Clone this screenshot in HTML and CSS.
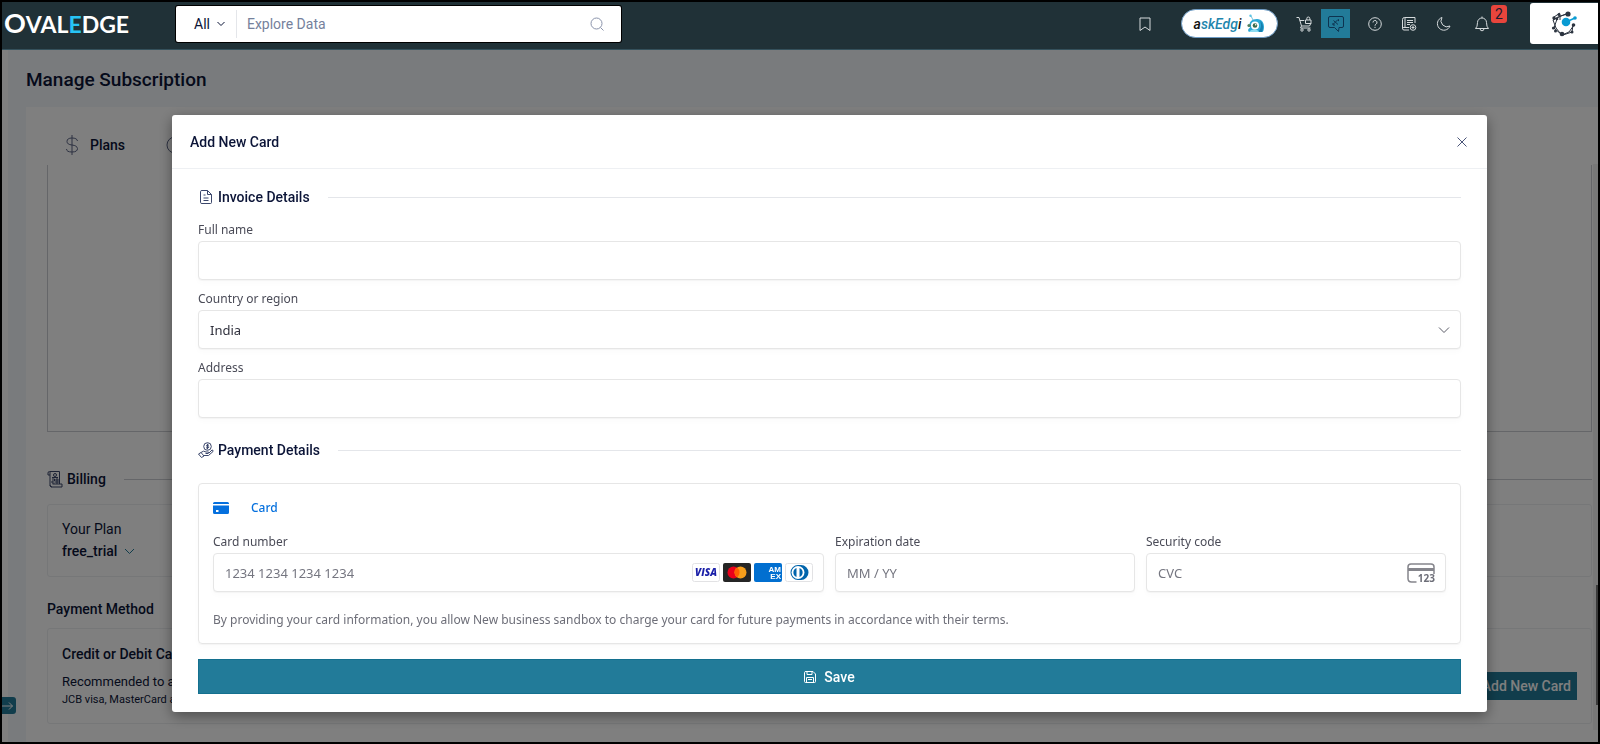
FILE: index.html
```html
<!DOCTYPE html>
<html lang="en">
<head>
    <meta charset="UTF-8">
    <meta name="viewport" content="width=device-width, initial-scale=1.0">
    <title>Manage Subscription</title>
    <link rel="stylesheet" href="styles.css">
</head>
<body>
<header class="topbar">
    <a class="logo" href="#"><span class="logo-big">O</span>VAL<span class="logo-accent">E</span>DGE</a>

    <form class="search">
        <button type="button" class="search-scope">All
            <svg width="10" height="6" viewBox="0 0 10 6"><path d="M1.5 1l3.5 3.5L8.500 1" /></svg>
        </button>
        <input type="text" class="search-input" placeholder="Explore Data" aria-label="Explore Data">
        <button type="button" class="search-go" aria-label="Search">
            <svg width="14" height="14" viewBox="0 0 14 14"><circle cx="6.500" cy="6.500" r="5.500" /><path d="M10.500 10.500l3 3" /></svg>
        </button>
    </form>

    <nav class="tools">
        <button class="tool" aria-label="Bookmarks">
            <svg width="16" height="16" viewBox="0 0 16 16"><path d="M3 2h10v12.500l-5-3.500-5 3.500z" /></svg>
        </button>
        <button class="ask" aria-label="askEdgi">
            <span>a<span class="ask-blue">skEdg</span>i</span>
            <svg width="18" height="20" viewBox="0 0 18 20">
                <path d="M6 6L4 2" stroke="#7ac4dd" fill="none" />
                <circle cx="3.500" cy="1.800" r="1.200" fill="#5cc4e4" />
                <path d="M2 18c-2-2 0-4 1-4-2-6 2-9 7-9 5 0 7 4 7 8 0 3-1 5-2 5z" fill="#2aa9d6" />
                <path d="M13 7c3 2 4 6 2 11h-4c3-3 4-7 2-11z" fill="#167fae" />
                <path d="M3 17c3-2 7-2 9 1H2z" fill="#8bdaf0" />
                <circle cx="8" cy="11.500" r="4" fill="#fff" />
                <circle cx="8" cy="11.500" r="2.300" fill="#3b6b4a" />
                <circle cx="8.700" cy="10.800" r=".8" fill="#fff" />
                <circle cx="2" cy="11.500" r="1.600" fill="#4f7f5e" />
            </svg>
        </button>
        <button class="tool tool-cart" aria-label="Cart">
            <svg width="16" height="16" viewBox="0 0 16 16">
                <path d="M.5 1.500h2.500l2.500 8.500h8l1.500-3M3.800 4.500h4.500M5.500 10l-1 2h10" />
                <circle cx="6" cy="14" r="1.200" /><circle cx="13" cy="14" r="1.200" />
                <path d="M9.500 4h5.500v3.500H9.500zM10.800 4V2.500a1.500 1.500 0 0 1 3 0V4" />
            </svg>
        </button>
        <button class="tool tool-active" aria-label="Feedback">
            <svg width="18" height="18" viewBox="0 0 18 18">
                <path d="M3 1.500h12q1.500 0 1.500 1.500v8q0 1.500-1.500 1.500h-3l-.5 4-4-4H3Q1.500 12.500 1.500 11V3Q1.500 1.500 3 1.500z" />
                <path d="M6 9.500l5-5M6.500 5.500l4.500 4M11.500 4.300v1.800M6 8v2h2" />
            </svg>
        </button>
        <button class="tool tool-help" aria-label="Help">
            <svg width="16" height="16" viewBox="0 0 16 16"><circle cx="8" cy="8" r="6.300" /><path d="M6 6.500a2 2 0 1 1 3 1.700q-1 .5-1 1.500M8 10.800v1.200" /></svg>
        </button>
        <button class="tool tool-doc" aria-label="Activity log">
            <svg width="16" height="16" viewBox="0 0 16 16">
                <path d="M14 7V1.500H3.500Q1.500 1.500 1.500 3.500v9q0 1.500 1.500 1.500h5M4 1.500v10M1.500 12.500q0-1 1.500-1h5M6 4.500h6M6 6.500h6M6 8.500h3" />
                <circle cx="12" cy="11.500" r="2.800" /><path d="M12 10v3M10.500 11.500h3" />
            </svg>
        </button>
        <button class="tool tool-moon" aria-label="Dark mode">
            <svg width="16" height="16" viewBox="0 0 16 16"><path d="M7 1.500A6.500 6.500 0 1 0 15 10 6 6 0 0 1 7 1.500z" /></svg>
        </button>
        <button class="tool tool-bell" aria-label="Notifications">
            <svg width="16" height="16" viewBox="0 0 16 16"><path d="M1.500 12.500Q3.500 11 3.500 6.500a4.500 4.500 0 0 1 9 0Q12.500 11 14.500 12.500zM8 2V.5M6 12.500a2 2.300 0 0 0 4 0" /></svg>
            <span class="badge">2</span>
        </button>
        <a class="tenant" href="#" aria-label="Tenant">
            <svg width="26" height="26" viewBox="0 0 26 26">
                <path class="net" d="M15 3L7 6 2 9l3 8 4 5 3 2 9-3 1-7M3 6l6-4M2 9l8-4 6-2M3 17l8 7M23 14l-5 7-7 3M6 8l-3 9M9 4v5" />
                <g fill="#2c3440">
                    <circle cx="17" cy="3" r="2.600" /><circle cx="8" cy="3.500" r="1.500" /><circle cx="3" cy="7" r="1.700" />
                    <circle cx="2.500" cy="17" r="1.600" /><circle cx="4.500" cy="20" r="1.500" /><circle cx="11" cy="23" r="2.300" />
                    <circle cx="21" cy="21" r="1.500" /><circle cx="22.500" cy="14" r="1.800" /><circle cx="6" cy="8" r="1.300" />
                </g>
                <path d="M15 11l9-4" stroke="#0a9bd3" stroke-width="1.500" />
                <circle cx="15" cy="11" r="4.300" fill="#0a9bd3" /><circle cx="24" cy="7" r="1.800" fill="#0a9bd3" />
            </svg>
        </a>
    </nav>
</header>

<main class="page">
    <h1>Manage Subscription</h1>
    <div class="content">
        <div class="tabs">
            <a class="tab" href="#">
                <svg width="14" height="20" viewBox="0 0 14 20"><path d="M7 0v20M12.500 6Q12 3 7 3T2 6.500Q2 9.500 7 10t5.500 3.500Q12.500 17 7 17T1.500 14" /></svg>
                Plans
            </a>
            <a class="tab" href="#" aria-label="Usage">
                <svg width="18" height="18" viewBox="0 0 18 18"><circle cx="9" cy="9" r="8" /><path d="M9 4v5l3 2" /></svg>
            </a>
        </div>

        <div class="plan-frame"></div>

        <h2 class="divider billing">
            <svg width="16" height="17" viewBox="0 0 16 17"><path d="M3 4H1V2q0-1.500 1.500-1.500H12.500V13M3 1v13M3 14q0 2 2 2h10v-3H5.500M5 16q-2 0-2-2" /><circle cx="8" cy="4" r="1.500" /><path d="M5 8h2.500v2H5v2h2.500M9 8h2v4H9zM9 10h2M5 6.500h6" /></svg>
            Billing
        </h2>
        <section class="panel plan-panel">
            <p class="plan-label">Your Plan</p>
            <button class="plan-name">free_trial
                <svg width="11" height="7" viewBox="0 0 11 7"><path d="M1 1l4.500 4.500L10 1" /></svg>
            </button>
        </section>

        <h2 class="method">Payment Method</h2>
        <section class="panel method-panel">
            <div>
                <h3>Credit or Debit Card</h3>
                <p class="method-note">Recommended to all users</p>
                <p class="method-types">JCB visa, MasterCard and more</p>
            </div>
            <button class="add-card">Add New Card</button>
        </section>
    </div>
    <div class="scroll-track"><div class="scroll-thumb"></div></div>
    <button class="side-toggle" aria-label="Open menu">
        <svg width="12" height="10" viewBox="0 0 12 10"><path d="M0 5h10.500M7 1.500L10.500 5 7 8.500" /></svg>
    </button>
</main>

<div class="overlay">
    <div class="modal" role="dialog" aria-labelledby="modalTitle">
        <div class="modal-head">
            <h2 id="modalTitle">Add New Card</h2>
            <button class="close" aria-label="Close">
                <svg width="10" height="10" viewBox="0 0 10 10"><path d="M.5.5l9 9M9.500.5l-9 9" /></svg>
            </button>
        </div>

        <form class="modal-body">
            <h3 class="divider">
                <svg width="16" height="16" viewBox="0 0 16 16"><path d="M4 1.500h5.500L13.500 5.500v8q0 1-1 1H4q-1.500 0-1.500-1v-11q0-1 1.500-1zM9.500 1.500v4h4M5.500 6h2M5.500 9h5M5.500 11.500h5" /></svg>
                Invoice Details
            </h3>
            <div class="field">
                <label for="fullName">Full name</label>
                <input type="text" id="fullName">
            </div>
            <div class="field">
                <label for="country">Country or region</label>
                <div class="control">
                    <select id="country">
                        <option>India</option>
                    </select>
                    <svg class="chevron" width="12" height="8" viewBox="0 0 12 8"><path d="M1 1.500l5 5 5-5" /></svg>
                </div>
            </div>
            <div class="field">
                <label for="address">Address</label>
                <input type="text" id="address">
            </div>

            <h3 class="divider payment-title">
                <svg width="16" height="16" viewBox="0 0 16 16"><circle cx="9.500" cy="4.500" r="3.800" /><path d="M11 3.300Q8.500 2 8.500 3.500T10.500 5 8 6M9.500 1.800v5.500M.5 12l2.500-1.500 3 3.500-2.500 1.500zM3 10.500Q5.500 8 8 10h2.500q1 1-.5 1.500H7.500M11 11l3-3q1.500 0 1 1.500l-4.500 4H6" /></svg>
                Payment Details
            </h3>
            <section class="card-box">
                <div class="card-type">
                    <svg width="16" height="12" viewBox="0 0 16 12"><path d="M0 2V1.500Q0 0 1.500 0h13Q16 0 16 1.500V2z" /><path fill-rule="evenodd" d="M0 3.500h16v7q0 1.500-1.500 1.500h-13Q0 12 0 10.500zM3 8v2h2.500V8z" /></svg>
                    Card
                </div>
                <div class="card-grid">
                    <div class="field card-number">
                        <label for="cardNumber">Card number</label>
                        <div class="control">
                            <input type="text" id="cardNumber" placeholder="1234 1234 1234 1234">
                            <div class="brands">
                                <svg width="28" height="19" viewBox="0 0 28 19"><rect x=".5" y=".5" width="27" height="18" rx="2" fill="#fff" stroke="#e2e2e4" /><text x="14" y="13" class="visa">VISA</text></svg>
                                <svg width="28" height="19" viewBox="0 0 28 19"><rect width="28" height="19" rx="2" fill="#252525" /><circle cx="10.500" cy="9.500" r="6" fill="#eb001b" /><circle cx="17.500" cy="9.500" r="6" fill="#f79e1b" /><path d="M14 4.600a6 6 0 0 1 0 9.800 6 6 0 0 1 0-9.800z" fill="#ff5f00" /></svg>
                                <svg width="28" height="19" viewBox="0 0 28 19"><rect width="28" height="19" rx="2" fill="#016fd0" /><text x="27" y="9" class="amex">AM</text><text x="27" y="16" class="amex">EX</text></svg>
                                <svg width="28" height="19" viewBox="0 0 28 19"><rect x=".5" y=".5" width="27" height="18" rx="2" fill="#fff" stroke="#e2e2e4" /><path d="M13 2h3a7.500 7.500 0 0 1 0 15h-3a7.500 7.500 0 0 1 0-15z" fill="#0165ac" /><circle cx="13" cy="9.500" r="6.500" fill="#fff" /><path d="M11.500 5a4.800 4.800 0 0 0 0 9zM14.500 5a4.800 4.800 0 0 1 0 9z" fill="#0165ac" /></svg>
                            </div>
                        </div>
                    </div>
                    <div class="field">
                        <label for="expiry">Expiration date</label>
                        <input type="text" id="expiry" placeholder="MM / YY">
                    </div>
                    <div class="field">
                        <label for="cvc">Security code</label>
                        <div class="control">
                            <input type="text" id="cvc" placeholder="CVC">
                            <svg class="cvc-icon" width="28" height="22" viewBox="0 0 28 22"><path d="M9.500 19H4.500q-3.500 0-3.500-3.500V4q0-3 3-3h20q3 0 3 3v7" fill="none" stroke="#85858c" stroke-width="1.500" /><path d="M1 5h26v3H1z" fill="#85858c" /><text x="28" y="19" class="cvc-digits">123</text></svg>
                        </div>
                    </div>
                </div>
                <p class="terms">By providing your card information, you allow New business sandbox to charge your card for future payments in accordance with their terms.</p>
            </section>

            <button type="button" class="save">
                <svg width="12" height="12" viewBox="0 0 12 12"><path d="M2 .5h7L11.500 3v7.500q0 1-1 1h-9q-1 0-1-1v-9q0-1 1.500-1zM3 .5v3h5v-3M2.500 11.500v-5h7v5M4 8.500h4" /></svg>
                Save
            </button>
        </form>
    </div>
</div>
</body>
</html>
```

FILE: styles.css
```css
* {
    box-sizing: border-box;
}

body {
    margin: 0;
    min-height: 100vh;
    display: flex;
    flex-direction: column;
    border: 2px solid #000;
    background: #f3f6fa;
    color: #0b1437;
    font-family: Roboto, "Liberation Sans", sans-serif;
    font-size: 14px;
}

h1, h2, h3, p {
    margin: 0;
    font-weight: 500;
}

button, input, select {
    font: inherit;
    color: inherit;
    margin: 0;
}

button {
    padding: 0;
    border: none;
    background: none;
    cursor: pointer;
}

a {
    color: inherit;
    text-decoration: none;
}

svg {
    flex: none;
    fill: none;
    stroke: currentColor;
}

/* top bar */
.topbar {
    position: relative;
    z-index: 20;
    display: flex;
    align-items: center;
    height: 48px;
    background: #203137;
    border-bottom: 1px solid #34505b;
}

.logo {
    width: 174px;
    padding: 0 0 4px 2px;
    color: #fff;
    font-family: Lato, sans-serif;
    font-size: 23px;
    font-weight: 700;
    line-height: 40px;
}

.logo-big {
    font-size: 27px;
}

.logo-accent {
    color: #27c4f5;
}

.search {
    display: flex;
    align-items: center;
    width: 28%;
    max-width: 445px;
    height: 36px;
    margin-bottom: 3px;
    background: #fff;
    border-radius: 2px;
    box-shadow: 0 0 0 1px #000;
}

.search-scope {
    display: flex;
    align-items: center;
    gap: 6px;
    height: 28px;
    padding: 0 10px 0 18px;
    border-right: 1px solid #e4e6ea;
}

.search-input {
    flex: 1;
    min-width: 0;
    padding: 0 10px;
    border: none;
    outline: none;
    background: none;
}

.search-input::placeholder {
    color: #75819c;
    opacity: 1;
}

.search-go {
    display: flex;
    margin-right: 17px;
    color: #8a93ab;
}

.tools {
    display: flex;
    align-items: center;
    height: 44px;
    margin-left: auto;
    margin-bottom: 4px;
    color: #d5dadc;
}

.tool {
    position: relative;
    display: flex;
}

.ask {
    display: flex;
    align-items: center;
    justify-content: center;
    gap: 6px;
    width: 97px;
    height: 29px;
    margin: 0 18px 0 28px;
    border: 1px solid #6d9cc6;
    border-radius: 15px;
    background: #fff;
    color: #111;
    font-weight: 500;
    font-style: italic;
}

.ask svg {
    stroke: none;
}

.ask-blue {
    color: #1f86ad;
}

.tool-active {
    justify-content: center;
    align-items: center;
    width: 29px;
    height: 29px;
    margin: 0 17px 0 9px;
    background: #227b99;
    color: #0d3350;
}

.tool-help, .tool-doc {
    margin-right: 18px;
}

.tool-moon {
    margin-right: 23px;
}

.tool-bell {
    margin-right: 40px;
}

.badge {
    position: absolute;
    left: 17px;
    top: -11px;
    width: 16px;
    height: 18px;
    border-radius: 3px;
    background: #e8453c;
    color: #1b1b2f;
    font-size: 14px;
    line-height: 18px;
    text-align: center;
}

.tenant {
    display: flex;
    align-items: center;
    justify-content: center;
    width: 68px;
    height: 41px;
    border-radius: 3px 0 0 3px;
    background: #fff;
}

.tenant svg {
    stroke: none;
}

.tenant .net {
    stroke: #2c3440;
}

/* page behind the dialog */
.page {
    position: relative;
    flex: 1;
    display: flex;
    flex-direction: column;
    padding: 18px 0 0 18px;
    border-left: 6px solid #fff;
    background: #f3f6fa;
}

h1 {
    font-size: 19px;
    line-height: 24px;
    margin-bottom: 15px;
}

.content {
    flex: 1;
    padding: 24px 6px 0 21px;
    background: #fff;
}

.tabs {
    display: flex;
    gap: 41px;
    padding-left: 18px;
}

.tab {
    display: flex;
    align-items: center;
    gap: 11px;
    height: 28px;
    font-weight: 500;
}

.tab svg {
    color: #5a6384;
}

.plan-frame {
    height: 267px;
    margin-top: 6px;
    border: 1px solid #cbcdd2;
    border-top: none;
}

.divider {
    display: flex;
    align-items: center;
    gap: 4px;
    font-size: 14px;
    line-height: 20px;
}

.divider svg {
    color: #3b466b;
}

.divider::after {
    content: "";
    flex: 1;
    height: 1px;
    margin-left: 14px;
    background: #e4e6ea;
}

.billing {
    margin-top: 37px;
}

.billing::after {
    background: #cbcdd2;
}

.panel {
    border: 1px solid #eceef1;
    border-radius: 3px;
}

.plan-panel {
    height: 73px;
    margin-top: 15px;
    padding: 13px 14px;
}

.plan-label {
    font-weight: 400;
    line-height: 22px;
}

.plan-name {
    display: flex;
    align-items: center;
    gap: 7px;
    line-height: 22px;
    font-weight: 500;
}

.plan-name svg {
    color: #227b99;
}

.method {
    margin: 22px 0 9px;
    font-size: 14px;
    line-height: 20px;
}

.method-panel {
    display: flex;
    justify-content: space-between;
    align-items: center;
    height: 96px;
    padding: 0 14px;
}

h3 {
    font-size: 14px;
    line-height: 20px;
}

.method-note {
    margin-top: 8px;
    font-size: 13px;
    font-weight: 400;
    line-height: 20px;
}

.method-types {
    font-size: 11px;
    font-weight: 400;
    line-height: 16px;
}

.add-card {
    height: 28px;
    margin-top: 20px;
    padding: 0 6px;
    background: #227b99;
    color: #fff;
    font-weight: 500;
}

.scroll-track {
    position: absolute;
    right: 0;
    top: 114px;
    bottom: 12px;
    width: 5px;
    background: #f1f1f1;
}

.scroll-thumb {
    position: absolute;
    right: 0;
    top: 421px;
    width: 2px;
    height: 120px;
    background: #777;
}

.side-toggle {
    position: absolute;
    left: -6px;
    bottom: 28px;
    display: flex;
    align-items: center;
    width: 14px;
    height: 17px;
    border-radius: 0 3px 3px 0;
    background: #227b99;
    color: #fff;
}

/* dialog */
.overlay {
    position: fixed;
    inset: 2px;
    z-index: 10;
    padding: 113px 111px 0 170px;
    background: rgba(0, 0, 0, 0.5);
}

.modal {
    border-radius: 3px;
    background: #fff;
    box-shadow: 0 4px 14px rgba(0, 0, 0, 0.4);
}

.modal-head {
    display: flex;
    justify-content: space-between;
    align-items: center;
    height: 54px;
    padding: 0 20px 0 18px;
    border-bottom: 1px solid #eef0f3;
}

.modal-head h2 {
    font-size: 14px;
}

.close {
    display: flex;
    color: #4a5578;
}

.modal-body {
    padding: 18px 26px;
}

.modal-body .divider {
    margin-bottom: 14px;
}

.field label {
    display: block;
    margin-top: 10px;
    color: #4a4b57;
    font-family: "Noto Sans", sans-serif;
    font-size: 12px;
    font-weight: 400;
    line-height: 18px;
}

.field input, .field select {
    display: block;
    width: 100%;
    height: 39px;
    margin-top: 2px;
    padding: 0 11px;
    border: 1px solid #e6e6e6;
    border-radius: 4px;
    outline: none;
    background: #fff;
    box-shadow: 0 1px 1px rgba(0, 0, 0, 0.03), 0 3px 6px rgba(0, 0, 0, 0.02);
    color: #30313d;
    font-family: "Noto Sans", sans-serif;
    font-size: 13px;
    appearance: none;
}

.field input::placeholder {
    color: #757680;
    opacity: 1;
}

.control {
    position: relative;
}

.chevron {
    position: absolute;
    right: 11px;
    top: 16px;
    color: #5b5c68;
}

.payment-title {
    margin-top: 22px;
}

.card-box {
    margin-top: 23px;
    padding: 15px 14px;
    border: 1px solid #e6e6e6;
    border-radius: 4px;
    box-shadow: 0 1px 1px rgba(0, 0, 0, 0.03), 0 3px 6px rgba(0, 0, 0, 0.02);
    font-family: "Noto Sans", sans-serif;
}

.card-type {
    display: flex;
    align-items: center;
    gap: 22px;
    color: #0570de;
    font-size: 12px;
    font-weight: 500;
    line-height: 17px;
}

.card-type svg {
    fill: #0570de;
    stroke: none;
}

.card-grid {
    display: grid;
    grid-template-columns: repeat(4, 1fr);
    gap: 11px;
    margin-top: 7px;
}

.card-number {
    grid-column: span 2;
}

.brands {
    position: absolute;
    right: 11px;
    top: 10px;
    display: flex;
    gap: 3px;
}

.brands svg {
    stroke: none;
}

.visa {
    fill: #1a1fa8;
    font: italic 800 10px "Open Sans", sans-serif;
    text-anchor: middle;
}

.amex {
    fill: #fff;
    font: 700 8px "Liberation Sans", sans-serif;
    text-anchor: end;
}

.cvc-icon {
    position: absolute;
    right: 11px;
    top: 10px;
    overflow: visible;
    stroke: none;
}

.cvc-digits {
    fill: #6d6e78;
    font: 700 10px "Open Sans", sans-serif;
    text-anchor: end;
}

.terms {
    margin-top: 19px;
    color: #6d6e78;
    font-size: 12px;
    font-weight: 400;
    line-height: 17px;
}

.save {
    display: flex;
    align-items: center;
    justify-content: center;
    gap: 8px;
    width: 100%;
    height: 35px;
    margin-top: 15px;
    border: 1px solid #14708f;
    background: #227b99;
    color: #fff;
    font-weight: 500;
}
```
